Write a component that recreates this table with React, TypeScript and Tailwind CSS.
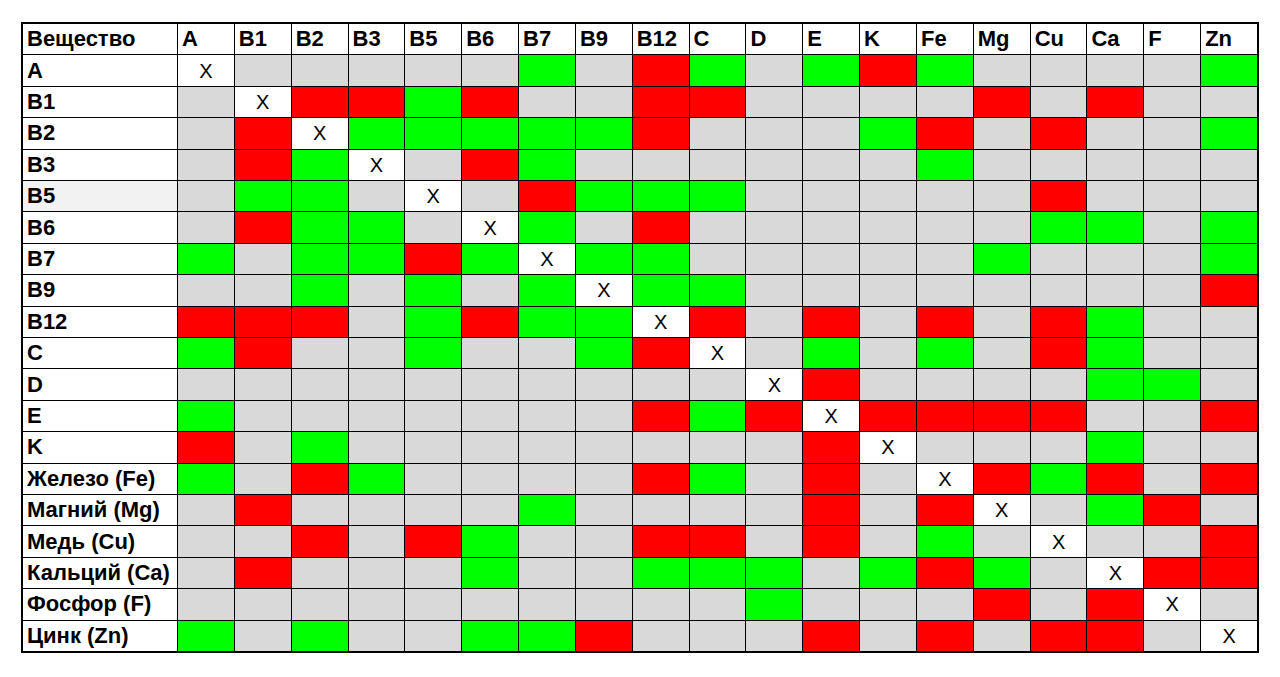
import React from 'react';

const COLUMNS = ['A', 'B1', 'B2', 'B3', 'B5', 'B6', 'B7', 'B9', 'B12', 'C', 'D', 'E', 'K', 'Fe', 'Mg', 'Cu', 'Ca', 'F', 'Zn'];

// g = нет данных, G = совместимы, R = несовместимы, X = само с собой
const ROWS: { label: string; cells: string }[] = [
  { label: 'A', cells: 'X g g g g g G g R G g G R G g g g g G' },
  { label: 'B1', cells: 'g X R R G R g g R R g g g g R g R g g' },
  { label: 'B2', cells: 'g R X G G G G G R g g g G R g R g g G' },
  { label: 'B3', cells: 'g R G X g R G g g g g g g G g g g g g' },
  { label: 'B5', cells: 'g G G g X g R G G G g g g g g R g g g' },
  { label: 'B6', cells: 'g R G G g X G g R g g g g g g G G g G' },
  { label: 'B7', cells: 'G g G G R G X G G g g g g g G g g g G' },
  { label: 'B9', cells: 'g g G g G g G X G G g g g g g g g g R' },
  { label: 'B12', cells: 'R R R g G R G G X R g R g R g R G g g' },
  { label: 'C', cells: 'G R g g G g g G R X g G g G g R G g g' },
  { label: 'D', cells: 'g g g g g g g g g g X R g g g g G G g' },
  { label: 'E', cells: 'G g g g g g g g R G R X R R R R g g R' },
  { label: 'K', cells: 'R g G g g g g g g g g R X g g g G g g' },
  { label: 'Железо (Fe)', cells: 'G g R G g g g g R G g R g X R G R g R' },
  { label: 'Магний (Mg)', cells: 'g R g g g g G g g g g R g R X g G R g' },
  { label: 'Медь (Cu)', cells: 'g g R g R G g g R R g R g G g X g g R' },
  { label: 'Кальций (Ca)', cells: 'g R g g g G g g G G G g G R G g X R R' },
  { label: 'Фосфор (F)', cells: 'g g g g g g g g g g G g g g R g R X g' },
  { label: 'Цинк (Zn)', cells: 'G g G g g G G R g g g R g R g R R g X' },
];

const CELL_BG: Record<string, string> = {
  g: 'bg-[#d9d9d9]',
  G: 'bg-[#00ff00]',
  R: 'bg-[#ff0000]',
  X: 'bg-white',
};

export default function App() {
  return (
    <div className="min-h-screen bg-white pl-[21px] pt-[22px] font-['Liberation_Sans',Arial,sans-serif] text-black">
      <div className="grid h-[631px] w-[1238px] grid-cols-[154px_repeat(19,minmax(0,1fr))] grid-rows-[repeat(20,minmax(0,1fr))] gap-px border-2 border-black bg-black">
        <div className="flex items-center bg-white pl-1 text-[22px] font-bold leading-none">Вещество</div>
        {COLUMNS.map((c) => (
          <div key={c} className="flex items-center bg-white pl-1 text-[22px] font-bold leading-none">
            {c}
          </div>
        ))}
        {ROWS.map((row) => (
          <React.Fragment key={row.label}>
            <div
              className={`flex items-center pl-1 text-[22px] font-bold leading-none ${
                row.label === 'B5' ? 'bg-[#f2f2f2]' : 'bg-white'
              }`}
            >
              {row.label}
            </div>
            {row.cells.split(' ').map((v, j) => (
              <div key={`${row.label}-${j}`} className={`flex items-center justify-center ${CELL_BG[v]}`}>
                {v === 'X' ? <span className="text-[20px] leading-none">X</span> : null}
              </div>
            ))}
          </React.Fragment>
        ))}
      </div>
    </div>
  );
}
